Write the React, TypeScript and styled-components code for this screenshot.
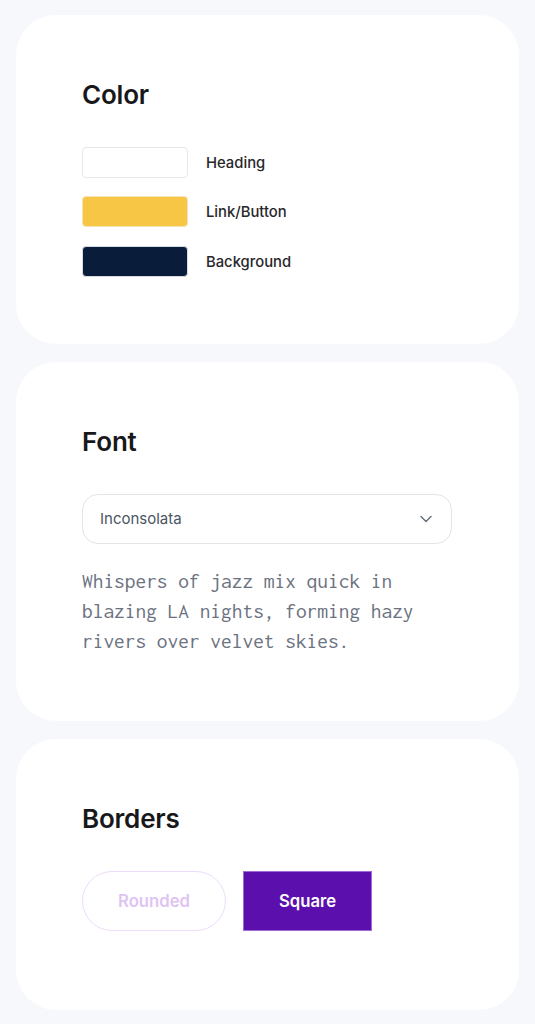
import React from 'react';
import styled, { createGlobalStyle } from 'styled-components';

const GlobalStyle = createGlobalStyle`
  html, body {
    margin: 0;
    padding: 0;
    background: #f7f8fc;
  }
  body {
    font-family: Inter, "Noto Sans", "Liberation Sans", sans-serif;
    -webkit-font-smoothing: antialiased;
  }
`

const Page = styled.div`
  display: flex;
  flex-direction: column;
  gap: 18px;
  padding: 15px 16px 15px 16px;
`

const Card = styled.section<{ $bottom?: number }>`
  background: #ffffff;
  border-radius: 40px;
  padding: 64px 66px ${p => p.$bottom ?? 64}px;
  display: flex;
  flex-direction: column;
`

const Title = styled.h2`
  margin: 0 0 36px;
  font-size: 26px;
  line-height: 32px;
  font-weight: 600;
  color: #18181b;
  letter-spacing: -0.2px;
`

const SwatchList = styled.div`
  display: flex;
  flex-direction: column;
  gap: 18.3px;
`

const SwatchRow = styled.div`
  display: flex;
  align-items: center;
  gap: 18px;
`

const Swatch = styled.div<{ $color: string; $border: string }>`
  width: 106px;
  height: 31px;
  box-sizing: border-box;
  border-radius: 4px;
  background: ${p => p.$color};
  border: 1px solid ${p => p.$border};
`

const SwatchLabel = styled.span`
  font-size: 14.8px;
  font-weight: 500;
  color: #27272a;
  padding-top: 1px;
`

const Select = styled.div`
  width: 370px;
  height: 50px;
  box-sizing: border-box;
  border: 1px solid #e4e4e7;
  border-radius: 16px;
  display: flex;
  align-items: center;
  justify-content: space-between;
  padding: 0 19px 0 17px;
  font-size: 15px;
  color: #4b5563;
`

const Sample = styled.p`
  margin: 22px 0 0;
  font-family: Inconsolata, "DejaVu Sans Mono", "Liberation Mono", monospace;
  font-size: 21.4px;
  line-height: 30px;
  color: #6b7280;
  width: 370px;
`

const ButtonRow = styled.div`
  display: flex;
  gap: 17px;
`

const Choice = styled.button<{ $shape: 'rounded' | 'square'; $active?: boolean }>`
  height: 60px;
  box-sizing: border-box;
  font-family: inherit;
  font-size: 16.7px;
  font-weight: 600;
  cursor: pointer;
  border-radius: ${p => (p.$shape === 'rounded' ? '30px' : '0')};
  width: ${p => (p.$shape === 'rounded' ? '144px' : '129px')};
  background: ${p => (p.$active ? '#5b0fad' : '#ffffff')};
  border: 1px solid ${p => (p.$active ? '#a36ad6' : '#eedcfa')};
  color: ${p => (p.$active ? '#ffffff' : '#dfc4f3')};
`

const Chevron = () => (
  <svg width="12" height="8" viewBox="0 0 12 8" fill="none">
    <path d="M1 1.5l5 5 5-5" stroke="#6b7280" strokeWidth="1.5" strokeLinecap="round" strokeLinejoin="round" />
  </svg>
)

const colors = [
  { label: 'Heading', color: '#ffffff', border: '#e5e7eb' },
  { label: 'Link/Button', color: '#f7c645', border: '#f3e2b5' },
  { label: 'Background', color: '#091c3a', border: '#d7dbe2' },
]

export default function App() {
  return <>
    <GlobalStyle />
    <Page>
      <Card $bottom={67}>
        <Title>Color</Title>
        <SwatchList>
          {colors.map(c => (
            <SwatchRow key={c.label}>
              <Swatch $color={c.color} $border={c.border} />
              <SwatchLabel>{c.label}</SwatchLabel>
            </SwatchRow>
          ))}
        </SwatchList>
      </Card>
      <Card $bottom={65}>
        <Title>Font</Title>
        <Select>
          <span>Inconsolata</span>
          <Chevron />
        </Select>
        <Sample>Whispers of jazz mix quick in blazing LA nights, forming hazy rivers over velvet skies.</Sample>
      </Card>
      <Card $bottom={79}>
        <Title>Borders</Title>
        <ButtonRow>
          <Choice $shape="rounded">Rounded</Choice>
          <Choice $shape="square" $active>Square</Choice>
        </ButtonRow>
      </Card>
    </Page>
  </>
}
